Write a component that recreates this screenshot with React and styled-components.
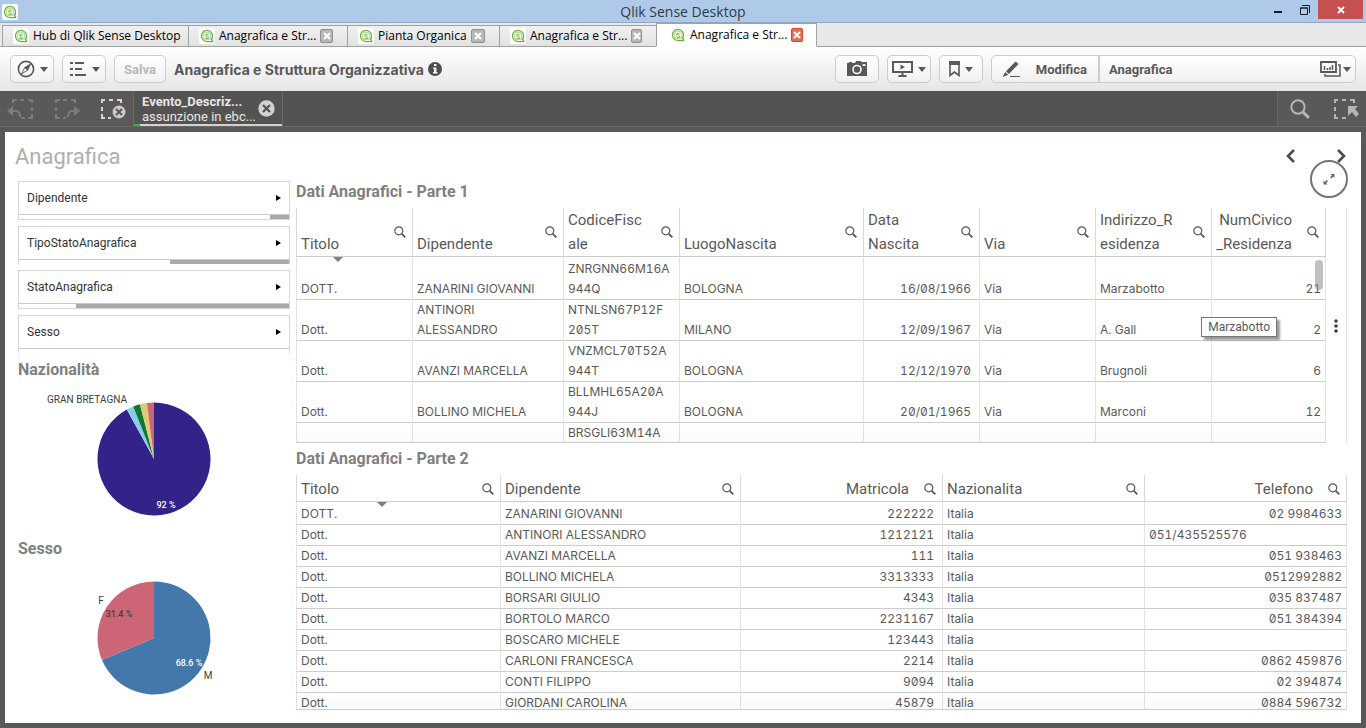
import React from 'react';
import styled, { createGlobalStyle } from 'styled-components';

const GlobalStyle = createGlobalStyle`
  * {
    box-sizing: border-box;
  }

  body {
    margin: 0;
    background: #595857;
    font-family: Roboto, "Liberation Sans", sans-serif;
    color: #595959;
  }

  button {
    margin: 0;
    padding: 0;
    border: 0;
    background: none;
    font: inherit;
    color: inherit;
    cursor: pointer;
  }

  svg {
    display: block;
    flex: none;
  }
`;

const Window = styled.div`
  display: flex;
  flex-direction: column;
  height: 100vh;
  min-height: 640px;
`;

/* window frame */

const TitleBar = styled.header`
  display: grid;
  grid-template-columns: 1fr auto 1fr;
  height: 23px;
  flex: none;
  background: #afcae8;
  border-bottom: 1px solid #90a8c3;
`;

const AppIcon = styled.span`
  align-self: center;
  margin-left: 2px;
  width: 16px;
  height: 16px;
  padding: 1px;
  border-radius: 2px;
  background: #fff;
`;

const WindowTitle = styled.h1`
  margin: 0;
  font-family: "Open Sans", sans-serif;
  font-size: 14px;
  font-weight: 400;
  line-height: 23px;
  color: #2f3a44;
`;

const WindowButtons = styled.div`
  display: flex;
  justify-content: flex-end;
  align-items: flex-start;
  padding-right: 3px;
`;

const WindowButton = styled.button`
  display: flex;
  align-items: center;
  justify-content: center;
  width: ${props => props.$close ? "45px" : "27px"};
  height: 19px;
  background: ${props => props.$close ? "#c75050" : "none"};
`;

const TabStrip = styled.nav`
  display: flex;
  align-items: flex-end;
  height: 24px;
  flex: none;
  padding-left: 2px;
  background: #e8e8e8;
  box-shadow: inset 0 -1px 0 #a0a0a0;
`;

const Tab = styled.div`
  display: flex;
  align-items: center;
  gap: 4px;
  width: ${props => props.$width};
  height: ${props => props.$active ? "24px" : "22px"};
  padding: 0 ${props => props.$active ? "13px 0 14px" : "14px 0 11px"};
  border: 1px solid #a0a0a0;
  border-right-width: ${props => props.$active ? "1px" : "0"};
  border-bottom-color: ${props => props.$active ? "#fff" : "#a0a0a0"};
  background: ${props => props.$active ? "#fff" : "linear-gradient(#f0f0f0, #e2e2e2)"};
`;

const TabLabel = styled.button`
  display: flex;
  flex: 1;
  align-items: center;
  gap: 5px;
  font-family: "Open Sans", sans-serif;
  font-size: 12px;
  line-height: 18px;
  white-space: nowrap;
  color: #000;
`;

const TabIcon = styled.span`
  padding: 1px;
  margin: -1px;
  border-radius: 2px;
  background: #fff;
`;

const TabClose = styled.button`
  display: flex;
  align-items: center;
  justify-content: center;
  width: 14px;
  height: 14px;
  border: 1px solid ${props => props.$active ? "#d8452c" : "#909090"};
  border-radius: 2px;
  background: ${props => props.$active ? "#dd7350" : "#b8b8b8"};
`;

/* toolbar */

const Toolbar = styled.div`
  display: flex;
  align-items: center;
  gap: 8px;
  height: 44px;
  flex: none;
  padding: 0 10px;
  background: linear-gradient(#fff, #e6e6e6);
`;

const ToolButton = styled.button`
  display: flex;
  align-items: center;
  justify-content: center;
  gap: 5px;
  width: ${props => props.$wide ? "52px" : "44px"};
  height: 28px;
  border: 1px solid #ccc;
  border-radius: 5px;
  background: linear-gradient(#fff, #f0f0f0);
  font-size: 13px;
  font-weight: 700;

  &:disabled {
    color: #b8b8b8;
    cursor: default;
  }
`;

const AppTitle = styled.h2`
  display: flex;
  align-items: center;
  gap: 4px;
  flex: 1;
  margin: 0;
  font-family: Inter, Roboto, sans-serif;
  font-size: 14px;
  font-weight: 700;
  white-space: nowrap;
`;

const SheetControl = styled.div`
  display: flex;
  width: 365px;
  height: 28px;
  border: 1px solid #ccc;
  border-radius: 5px;
  background: linear-gradient(#fff, #f0f0f0);
  font-size: 13px;
  font-weight: 700;
`;

const EditButton = styled.button`
  display: flex;
  align-items: center;
  justify-content: space-between;
  width: 108px;
  padding: 0 11px;
  border-right: 2px solid #ccc;
`;

const SheetButton = styled.button`
  display: flex;
  flex: 1;
  align-items: center;
  gap: 2px;
  padding: 0 4px 0 9px;
`;

const SheetName = styled.span`
  flex: 1;
  text-align: left;
`;

/* selections */

const SelectionBar = styled.div`
  display: flex;
  height: 36px;
  flex: none;
  border-bottom: 1px solid #6a6968;
  background: #545351;
`;

const SelectionTools = styled.div`
  display: flex;
  align-items: center;
  justify-content: space-between;
  width: ${props => props.$end ? "89px" : "134px"};
  padding: ${props => props.$end ? "0 6px 0 12px" : "0 7px"};
  border: solid #6a6968;
  border-width: ${props => props.$end ? "0 0 0 1px" : "0 1px 0 0"};
  background: #5a5958;
`;

const SelectionItem = styled.div`
  display: flex;
  align-items: center;
  justify-content: space-between;
  width: 149px;
  margin-right: auto;
  padding: 0 7px 0 8px;
  border-right: 1px solid #6a6968;
  background: linear-gradient(to right, #3fae49 6px, #d2d2d2 6px) bottom / 100% 2px no-repeat;
`;

const SelectionText = styled.div`
  font-size: 13px;
  line-height: 15px;
  color: #e6e6e6;
  white-space: nowrap;
`;

/* sheet */

const Sheet = styled.main`
  position: relative;
  display: flex;
  flex: 1;
  flex-direction: column;
  min-height: 0;
  margin: 5px;
  padding: 0 14px 13px 13px;
  background: #fff;
`;

const SheetHeader = styled.div`
  display: flex;
  align-items: center;
  justify-content: space-between;
  height: 44px;
  flex: none;
  padding-top: 4px;
`;

const SheetTitle = styled.h2`
  margin: 0 0 0 -3px;
  font-size: 22px;
  font-weight: 400;
  color: #b0aeac;
`;

const SheetNav = styled.div`
  display: flex;
  gap: 34px;
  margin-right: -2px;
`;

const ExpandButton = styled.button`
  position: absolute;
  top: 28px;
  right: 13px;
  display: flex;
  align-items: center;
  justify-content: center;
  width: 38px;
  height: 38px;
  border: 2px solid #737373;
  border-radius: 50%;
  background: #fff;
`;

const Columns = styled.div`
  display: grid;
  grid-template-rows: minmax(0, 1fr);
  grid-template-columns: 272px minmax(0, 1fr);
  gap: 6px;
  flex: 1;
  min-height: 0;
`;

const Sidebar = styled.aside`
  padding-top: 5px;
`;

const Filters = styled.div`
  display: flex;
  flex-direction: column;
  gap: 6px;
  margin-bottom: 5px;
`;

const Filter = styled.button`
  display: block;
  border: 1px solid #d5d5d5;
  border-bottom-width: ${props => props.$open ? "0" : "1px"};
  font-size: 12px;
  text-align: left;
  color: #333;
`;

const FilterLabel = styled.span`
  display: flex;
  align-items: center;
  justify-content: space-between;
  height: 33px;
  padding: 0 8px;
  border-bottom: 1px solid #ccc;
`;

const FilterTrack = styled.span`
  display: block;
  height: 4px;
`;

const FilterExcluded = styled.span`
  display: block;
  height: 100%;
  margin-left: auto;
  background: #a9a9a9;
`;

const ObjectTitle = styled.h3`
  margin: 0;
  font-size: 16px;
  font-weight: 700;
  line-height: ${props => props.$chart ? "24px" : "32px"};
  color: #808080;
`;

const ChartLabel = styled.text`
  font-size: ${props => props.$small ? "9px" : "10px"};
  font-weight: ${props => props.$small ? 500 : 400};
  text-anchor: middle;
  fill: ${props => props.$light ? "#fff" : "#404040"};
`;

const Tables = styled.section`
  display: grid;
  grid-template-rows: minmax(0, 1fr) minmax(0, 1fr);
  min-height: 0;
`;

const Panel = styled.div`
  display: flex;
  flex-direction: column;
  min-height: 0;
`;

const PanelBody = styled.div`
  position: relative;
  display: flex;
  flex: 1;
  min-height: 0;
`;

const TableBox = styled.div`
  position: relative;
  flex: 1;
  overflow: hidden;
  border-bottom: 1px solid #ccc;

  &::after {
    content: "";
    position: absolute;
    right: 0;
    bottom: 0;
    left: 0;
    height: 20px;
    background: linear-gradient(rgba(0, 0, 0, 0), rgba(0, 0, 0, 0.02));
    pointer-events: none;
  }
`;

const DataTable = styled.table`
  width: 100%;
  table-layout: fixed;
  border-collapse: separate;
  border-spacing: 0;
  font-family: Inter, Roboto, sans-serif;
  font-variant-numeric: tabular-nums slashed-zero;
  font-size: 12px;
  line-height: 20px;

  tbody tr:first-child td {
    padding-top: 2px;
  }
`;

const Th = styled.th`
  height: 27px;
  padding: 0 6px 0 4px;
  border-left: 1px solid #d9d9d9;
  border-bottom: 1px solid #ccc;
  vertical-align: bottom;
  font-family: Roboto, sans-serif;
  font-size: 15px;
  font-weight: 400;
  line-height: 24px;
  text-align: ${props => props.$right ? "right" : "left"};

  &:last-child {
    border-right: 1px solid #d9d9d9;
  }
`;

const ThContent = styled.div`
  display: flex;
  align-items: stretch;
  min-height: ${props => props.$lines * 24}px;
`;

const ThText = styled.span`
  position: relative;
  display: flex;
  flex: 1;
  flex-direction: column;
  justify-content: flex-end;
  padding-right: ${props => props.$right ? "15px" : "0"};
  white-space: nowrap;
`;

const SortMark = styled.i`
  position: absolute;
  bottom: -6px;
  left: 50%;
  margin-left: -15px;
  border: 5px solid transparent;
  border-top-color: #808080;
  border-bottom-width: 0;
`;

const Td = styled.td`
  height: 21px;
  padding: 0 ${props => props.$right ? "8px" : "4px"} 0 4px;
  border-left: 1px solid #e3e3e3;
  border-bottom: 1px solid #ccc;
  vertical-align: bottom;
  text-align: ${props => props.$right ? "right" : "left"};
  overflow-wrap: anywhere;

  &:last-child {
    padding-right: 4px;
    border-right: 1px solid #e3e3e3;
  }
`;

const ScrollThumb = styled.i`
  position: absolute;
  top: 52px;
  right: 3px;
  width: 8px;
  height: 30px;
  border-radius: 4px;
  background: rgba(150, 150, 150, 0.6);
`;

const Gutter = styled.button`
  display: flex;
  align-items: center;
  justify-content: center;
  width: 21px;
  border-right: 1px solid #e3e3e3;
`;

const Tooltip = styled.div`
  position: absolute;
  top: 109px;
  right: 70px;
  padding: 0 6px;
  border: 1px solid #767676;
  background: #fff;
  box-shadow: 3px 3px 2px rgba(0, 0, 0, 0.4);
  font-size: 12px;
  line-height: 18px;
  color: #575757;
`;

/* icons */

const QlikIcon = () => (
  <svg width="14" height="14" viewBox="0 0 14 14" fill="none" stroke="#6cb33f">
    <path d="M11.3 10.6A5.6 5.6 0 1 0 7 12.6h5.6v-1.2l-1.3-.8a5.6 5.6 0 0 0 1.3-4" strokeWidth="1.3" />
    <circle cx="7" cy="7" r="3.9" strokeWidth="0.6" />
    <text x="7" y="9.6" textAnchor="middle" fontSize="7" fontWeight="700" fontFamily="Roboto, sans-serif" fill="#6cb33f" stroke="none">S</text>
  </svg>
);

const CrossIcon = ({ size = 8, color = "#fff", width = 2 }) => (
  <svg width={size} height={size} viewBox="0 0 8 8" stroke={color} strokeWidth={width}>
    <path d="M1 1l6 6M7 1L1 7" />
  </svg>
);

const Caret = () => (
  <svg width="8" height="5" viewBox="0 0 8 5" fill="#595959">
    <path d="M0 0h8L4 5z" />
  </svg>
);

const CompassIcon = () => (
  <svg width="18" height="18" viewBox="0 0 18 18" fill="none" stroke="#595959" strokeWidth="1.6">
    <circle cx="9" cy="9" r="7.6" />
    <path d="M13.4 4.2L10.4 10.4 7.6 7.6z" fill="#595959" strokeWidth="0.6" />
    <path d="M13.4 4.2L7.6 7.6 4.600 13.8l5.800-3.4z" strokeWidth="0.9" />
  </svg>
);

const ListIcon = () => (
  <svg width="18" height="14" viewBox="0 0 18 14" fill="#595959">
    <path d="M1 0h3v2H1zM1 6h3v2H1zM1 12h3v2H1zM6 0h9v2H6zM6 6h7v2H6zM6 12h11v2H6z" />
  </svg>
);

const InfoIcon = () => (
  <svg width="14" height="14" viewBox="0 0 14 14">
    <circle cx="7" cy="7" r="7" fill="#4f4f4f" />
    <path d="M6 2h2.4v2H6zM5 5.400h3.400V10h1v1.400H5V10h1V6.800H5z" fill="#fff" />
  </svg>
);

const CameraIcon = () => (
  <svg width="20" height="16" viewBox="0 0 20 16">
    <path d="M0 2h2V1h3v1h3l1-2h5l1 2V1h5v14H0z" fill="#595959" />
    <circle cx="10" cy="8.500" r="4" fill="none" stroke="#fff" strokeWidth="1.6" />
    <path d="M15.500 3.200h3V5h-3z" fill="#fff" />
  </svg>
);

const PresentIcon = () => (
  <svg width="21" height="16" viewBox="0 0 21 16" fill="#595959">
    <path d="M0 0h21v12H0zM2 2v8h17V2z" fillRule="evenodd" />
    <path d="M8.500 3.500l4.500 2.500-4.500 2.500zM9.500 12h2v2h3v2h-8v-2h3z" />
  </svg>
);

const BookmarkIcon = () => (
  <svg width="11" height="16" viewBox="0 0 11 16">
    <path d="M1 1h9v13.500L5.500 11 1 14.500z" fill="none" stroke="#595959" strokeWidth="1.600" />
    <path d="M0 0h11v4H0z" fill="#595959" />
  </svg>
);

const PencilIcon = () => (
  <svg width="17" height="16" viewBox="0 0 17 16" fill="#595959">
    <path d="M12.500.5l3 2.500L6 13l-3-2.700zM2.300 11l3 2.800L1 15.500l-1 .3.200-1z" />
    <path d="M7 15h10v1H7z" />
  </svg>
);

const SheetsIcon = () => (
  <svg width="21" height="16" viewBox="0 0 21 16" fill="none" stroke="#595959" strokeWidth="1.800">
    <path d="M1 1h15v10H1z" />
    <path d="M18 4h2v11H5v-2M4.500 9V5M7.500 9V7M10 9V6M12.500 9V4" strokeWidth="1.500" />
  </svg>
);

const DashedBox = ({ children, color = "#7d7c7b", width = 27 }) => (
  <svg width={width} height="20" viewBox={`0 0 ${width} 20`} fill="none" stroke={color} strokeWidth="2">
    {children}
  </svg>
);

const BackIcon = () => (
  <DashedBox>
    <path d="M6 4V1h4M13 1h4M21 1h4v3M25 8v4M25 15v4h-4M18 19h-4" />
    <path d="M1 12h8c3 0 4 2 4 6" />
    <path d="M0 12l6-5v10z" fill="#7d7c7b" stroke="none" />
  </DashedBox>
);

const ForwardIcon = () => (
  <DashedBox>
    <path d="M3 4V1h4M10 1h4M18 1h4v3M3 8v4M3 15v4h4M10 19h3" />
    <path d="M23 12h-4c-3 0-4 2-4 6" />
    <path d="M27 12l-6-5v10z" fill="#7d7c7b" stroke="none" />
  </DashedBox>
);

const ClearAllIcon = () => (
  <DashedBox color="#d6d6d6">
    <path d="M3 4V1h3M10 1h4M18 1h4v3M3 8v4M3 15v4h3M9 19h3" />
    <circle cx="20" cy="13" r="6.500" fill="#c9c9c9" stroke="none" />
    <path d="M17 10l6 6M23 10l-6 6" stroke="#5a5958" />
  </DashedBox>
);

const SelectToolIcon = () => (
  <DashedBox color="#b5b5b5">
    <path d="M2 4V1h3M9 1h4M17 1h4v3M2 8v4M2 15v4h3M9 19h4" />
    <path d="M15 7h10l-3 3 4 5-3 3-4-5-4 4z" fill="#b5b5b5" stroke="none" />
  </DashedBox>
);

const SearchIcon = ({ size = 12, color = "#595959" }) => (
  <svg width={size} height={size} viewBox="0 0 12 12" fill="none" stroke={color}>
    <circle cx="4.800" cy="4.800" r="4" strokeWidth="1.200" />
    <path d="M7.800 7.800l3.500 3.500" strokeWidth="1.900" />
  </svg>
);

const ClearIcon = () => (
  <svg width="17" height="17" viewBox="0 0 17 17">
    <circle cx="8.500" cy="8.500" r="8.200" fill="#d2d2d2" />
    <path d="M5 5l7 7M12 5l-7 7" stroke="#545351" strokeWidth="2.200" />
  </svg>
);

const Chevron = ({ right }) => (
  <svg width="16" height="14" viewBox="0 0 16 14" fill="none" stroke="#4d4d4d" strokeWidth="2.600">
    <path d={right ? "M5 1l6 6-6 6" : "M11 1L5 7l6 6"} />
  </svg>
);

const ExpandIcon = () => (
  <svg width="12" height="12" viewBox="0 0 12 12" fill="#6b6b6b">
    <path d="M7.500 1h4v4L10.200 3.700 8.300 5.600 7 4.300l1.900-1.900zM.5 7.500l1.300 1.300 1.900-1.900L5 8.200l-1.900 1.900 1.400 1.400h-4z" />
  </svg>
);

const DotsIcon = () => (
  <svg width="4" height="14" viewBox="0 0 4 14" fill="#404040">
    <circle cx="2" cy="2" r="1.800" />
    <circle cx="2" cy="7" r="1.800" />
    <circle cx="2" cy="12" r="1.800" />
  </svg>
);

/* data */

const TABS = [
  { label: "Hub di Qlik Sense Desktop", width: "186px" },
  { label: "Anagrafica e Str...", width: "159px", closable: true },
  { label: "Pianta Organica", width: "152px", closable: true },
  { label: "Anagrafica e Str...", width: "157px", closable: true },
  { label: "Anagrafica e Str...", width: "161px", closable: true, active: true },
];

const FILTERS = [
  { name: "Dipendente", excluded: 7 },
  { name: "TipoStatoAnagrafica", excluded: 44, open: true },
  { name: "StatoAnagrafica", excluded: 79 },
  { name: "Sesso", excluded: 0, open: true },
];

const NATIONS = [
  { share: 92, color: "#332288" },
  { share: 2, color: "#88ccee" },
  { share: 2, color: "#117733" },
  { share: 2, color: "#ddcc77" },
  { share: 2, color: "#cc6677" },
];

const GENDERS = [
  { share: 68.6, color: "#4477aa" },
  { share: 31.4, color: "#cc6677" },
];

const PART_1 = {
  columns: [
    { lines: ["Titolo"], width: 116, sorted: true },
    { lines: ["Dipendente"], width: 151 },
    { lines: ["CodiceFisc", "ale"], width: 116 },
    { lines: ["LuogoNascita"], width: 184 },
    { lines: ["Data", "Nascita"], width: 116, right: true, leftHead: true },
    { lines: ["Via"], width: 116 },
    { lines: ["Indirizzo_R", "esidenza"], width: 116 },
    { lines: ["NumCivico", "_Residenza"], width: 115, right: true },
  ],
  rows: [
    ["DOTT.", "ZANARINI GIOVANNI", "ZNRGNN66M16A\n944Q", "BOLOGNA", "16/08/1966", "Via", "Marzabotto", "21"],
    ["Dott.", "ANTINORI\nALESSANDRO", "NTNLSN67P12F\n205T", "MILANO", "12/09/1967", "Via", "A. Gall", "2"],
    ["Dott.", "AVANZI MARCELLA", "VNZMCL70T52A\n944T", "BOLOGNA", "12/12/1970", "Via", "Brugnoli", "6"],
    ["Dott.", "BOLLINO MICHELA", "BLLMHL65A20A\n944J", "BOLOGNA", "20/01/1965", "Via", "Marconi", "12"],
    ["", "", "BRSGLI63M14A\n\u00a0", "", "", "", "", ""],
  ],
};

const PART_2 = {
  columns: [
    { lines: ["Titolo"], width: 204, sorted: true },
    { lines: ["Dipendente"], width: 240 },
    { lines: ["Matricola"], width: 202, right: true },
    { lines: ["Nazionalita"], width: 202 },
    { lines: ["Telefono"], width: 203, right: true },
  ],
  rows: [
    ["DOTT.", "ZANARINI GIOVANNI", "222222", "Italia", "02 9984633"],
    ["Dott.", "ANTINORI ALESSANDRO", "1212121", "Italia", "051/435525576"],
    ["Dott.", "AVANZI MARCELLA", "111", "Italia", "051 938463"],
    ["Dott.", "BOLLINO MICHELA", "3313333", "Italia", "0512992882"],
    ["Dott.", "BORSARI GIULIO", "4343", "Italia", "035 837487"],
    ["Dott.", "BORTOLO MARCO", "2231167", "Italia", "051 384394"],
    ["Dott.", "BOSCARO MICHELE", "123443", "Italia", ""],
    ["Dott.", "CARLONI FRANCESCA", "2214", "Italia", "0862 459876"],
    ["Dott.", "CONTI FILIPPO", "9094", "Italia", "02 394874"],
    ["Dott.", "GIORDANI CAROLINA", "45879", "Italia", "0884 596732"],
  ],
};

const CX = 136;
const CY = 77;
const R = 56.5;

function slicePath(from, to) {
  const point = share => {
    const angle = (share / 100) * 2 * Math.PI;
    return `${CX + R * Math.sin(angle)} ${CY - R * Math.cos(angle)}`;
  };
  return `M${CX} ${CY}L${point(from)}A${R} ${R} 0 ${to - from > 50 ? 1 : 0} 1 ${point(to)}z`;
}

function Pie({ label, slices, children }) {
  let start = 0;
  return (
    <svg width="272" height="155" viewBox="0 0 272 155" role="img" aria-label={label}>
      {slices.map((slice, i) => {
        const from = start;
        start += slice.share;
        return <path key={i} d={slicePath(from, start)} fill={slice.color} />;
      })}
      {children}
    </svg>
  );
}

// text values in a numeric column stay on the left
const isNumeric = value => !(value.includes("/") && value.length > 10);

function Grid({ columns, rows }) {
  const headLines = Math.max(...columns.map(col => col.lines.length));
  return (
    <DataTable>
      <colgroup>
        {columns.map((col, i) => <col key={i} width={col.width} />)}
      </colgroup>
      <thead>
        <tr>
          {columns.map((col, i) => {
            const right = col.right && !col.leftHead;
            return (
              <Th key={i} scope="col" $right={right}>
                <ThContent $lines={headLines}>
                  <ThText $right={right}>
                    {col.lines.map(line => <span key={line}>{line}</span>)}
                    {col.sorted && <SortMark />}
                  </ThText>
                  <button type="button" aria-label={`Cerca ${col.lines.join("")}`}><SearchIcon /></button>
                </ThContent>
              </Th>
            );
          })}
        </tr>
      </thead>
      <tbody>
        {rows.map((row, r) => (
          <tr key={r}>
            {row.map((value, i) => (
              <Td key={i} $right={columns[i].right && isNumeric(value)}>
                {value.split("\n").map((line, n) => (
                  <React.Fragment key={n}>{n > 0 && <br />}{line}</React.Fragment>
                ))}
              </Td>
            ))}
          </tr>
        ))}
      </tbody>
    </DataTable>
  );
}

function App() {
  return (
    <Window>
      <GlobalStyle />
      <TitleBar>
        <AppIcon><QlikIcon /></AppIcon>
        <WindowTitle>Qlik Sense Desktop</WindowTitle>
        <WindowButtons>
          <WindowButton type="button" aria-label="Riduci a icona">
            <svg width="8" height="10" viewBox="0 0 8 10"><path d="M0 6h8v2H0z" fill="#1c1c1c" /></svg>
          </WindowButton>
          <WindowButton type="button" aria-label="Ripristina">
            <svg width="10" height="10" viewBox="0 0 10 10" fill="none" stroke="#1c1c1c">
              <path d="M.5 3v6.500h7V3zM0 3h8M2 .5h7.500V8" />
            </svg>
          </WindowButton>
          <WindowButton type="button" aria-label="Chiudi" $close><CrossIcon width={1.8} /></WindowButton>
        </WindowButtons>
      </TitleBar>
      <TabStrip>
        {TABS.map((tab, i) => (
          <Tab key={i} $width={tab.width} $active={tab.active}>
            <TabLabel type="button"><TabIcon><QlikIcon /></TabIcon>{tab.label}</TabLabel>
            {tab.closable && (
              <TabClose type="button" aria-label="Chiudi scheda" $active={tab.active}><CrossIcon /></TabClose>
            )}
          </Tab>
        ))}
      </TabStrip>
      <Toolbar>
        <ToolButton type="button" aria-label="Navigazione"><CompassIcon /><Caret /></ToolButton>
        <ToolButton type="button" aria-label="Menu"><ListIcon /><Caret /></ToolButton>
        <ToolButton type="button" disabled $wide>Salva</ToolButton>
        <AppTitle>Anagrafica e Struttura Organizzativa <InfoIcon /></AppTitle>
        <ToolButton type="button" aria-label="Snapshot"><CameraIcon /></ToolButton>
        <ToolButton type="button" aria-label="Storie"><PresentIcon /><Caret /></ToolButton>
        <ToolButton type="button" aria-label="Segnalibri"><BookmarkIcon /><Caret /></ToolButton>
        <SheetControl>
          <EditButton type="button"><PencilIcon />Modifica</EditButton>
          <SheetButton type="button"><SheetName>Anagrafica</SheetName><SheetsIcon /><Caret /></SheetButton>
        </SheetControl>
      </Toolbar>
      <SelectionBar>
        <SelectionTools>
          <button type="button" aria-label="Indietro"><BackIcon /></button>
          <button type="button" aria-label="Avanti"><ForwardIcon /></button>
          <button type="button" aria-label="Cancella selezioni"><ClearAllIcon /></button>
        </SelectionTools>
        <SelectionItem>
          <SelectionText>
            <strong>Evento_Descriz...</strong>
            <br />
            assunzione in ebc...
          </SelectionText>
          <button type="button" aria-label="Rimuovi selezione"><ClearIcon /></button>
        </SelectionItem>
        <SelectionTools $end>
          <button type="button" aria-label="Cerca"><SearchIcon size={20} color="#b5b5b5" /></button>
          <button type="button" aria-label="Strumento selezioni"><SelectToolIcon /></button>
        </SelectionTools>
      </SelectionBar>
      <Sheet>
        <SheetHeader>
          <SheetTitle>Anagrafica</SheetTitle>
          <SheetNav>
            <button type="button" aria-label="Foglio precedente"><Chevron /></button>
            <button type="button" aria-label="Foglio successivo"><Chevron right /></button>
          </SheetNav>
        </SheetHeader>
        <ExpandButton type="button" aria-label="Schermo intero"><ExpandIcon /></ExpandButton>
        <Columns>
          <Sidebar>
            <Filters>
              {FILTERS.map(filter => (
                <Filter key={filter.name} type="button" $open={filter.open}>
                  <FilterLabel>
                    {filter.name}
                    <svg width="5" height="6" viewBox="0 0 5 6"><path d="M0 0l5 3-5 3z" fill="#000" /></svg>
                  </FilterLabel>
                  <FilterTrack>
                    <FilterExcluded style={{ width: `${filter.excluded}%` }} />
                  </FilterTrack>
                </Filter>
              ))}
            </Filters>
            <ObjectTitle $chart>Nazionalità</ObjectTitle>
            <Pie label="Nazionalità" slices={NATIONS}>
              <ChartLabel x="69" y="21">GRAN BRETAGNA</ChartLabel>
              <ChartLabel x="148" y="126" $small $light>92 %</ChartLabel>
            </Pie>
            <ObjectTitle $chart>Sesso</ObjectTitle>
            <Pie label="Sesso" slices={GENDERS}>
              <ChartLabel x="83" y="43">F</ChartLabel>
              <ChartLabel x="101" y="56" $small>31.4 %</ChartLabel>
              <ChartLabel x="171" y="105" $small $light>68.6 %</ChartLabel>
              <ChartLabel x="190" y="118">M</ChartLabel>
            </Pie>
          </Sidebar>
          <Tables>
            <Panel>
              <ObjectTitle>Dati Anagrafici - Parte 1</ObjectTitle>
              <PanelBody>
                <TableBox>
                  <Grid {...PART_1} />
                  <ScrollThumb />
                </TableBox>
                <Gutter type="button" aria-label="Altre colonne"><DotsIcon /></Gutter>
                <Tooltip role="tooltip">Marzabotto</Tooltip>
              </PanelBody>
            </Panel>
            <Panel>
              <ObjectTitle>Dati Anagrafici - Parte 2</ObjectTitle>
              <PanelBody>
                <TableBox>
                  <Grid {...PART_2} />
                </TableBox>
              </PanelBody>
            </Panel>
          </Tables>
        </Columns>
      </Sheet>
    </Window>
  );
}

export default App;
